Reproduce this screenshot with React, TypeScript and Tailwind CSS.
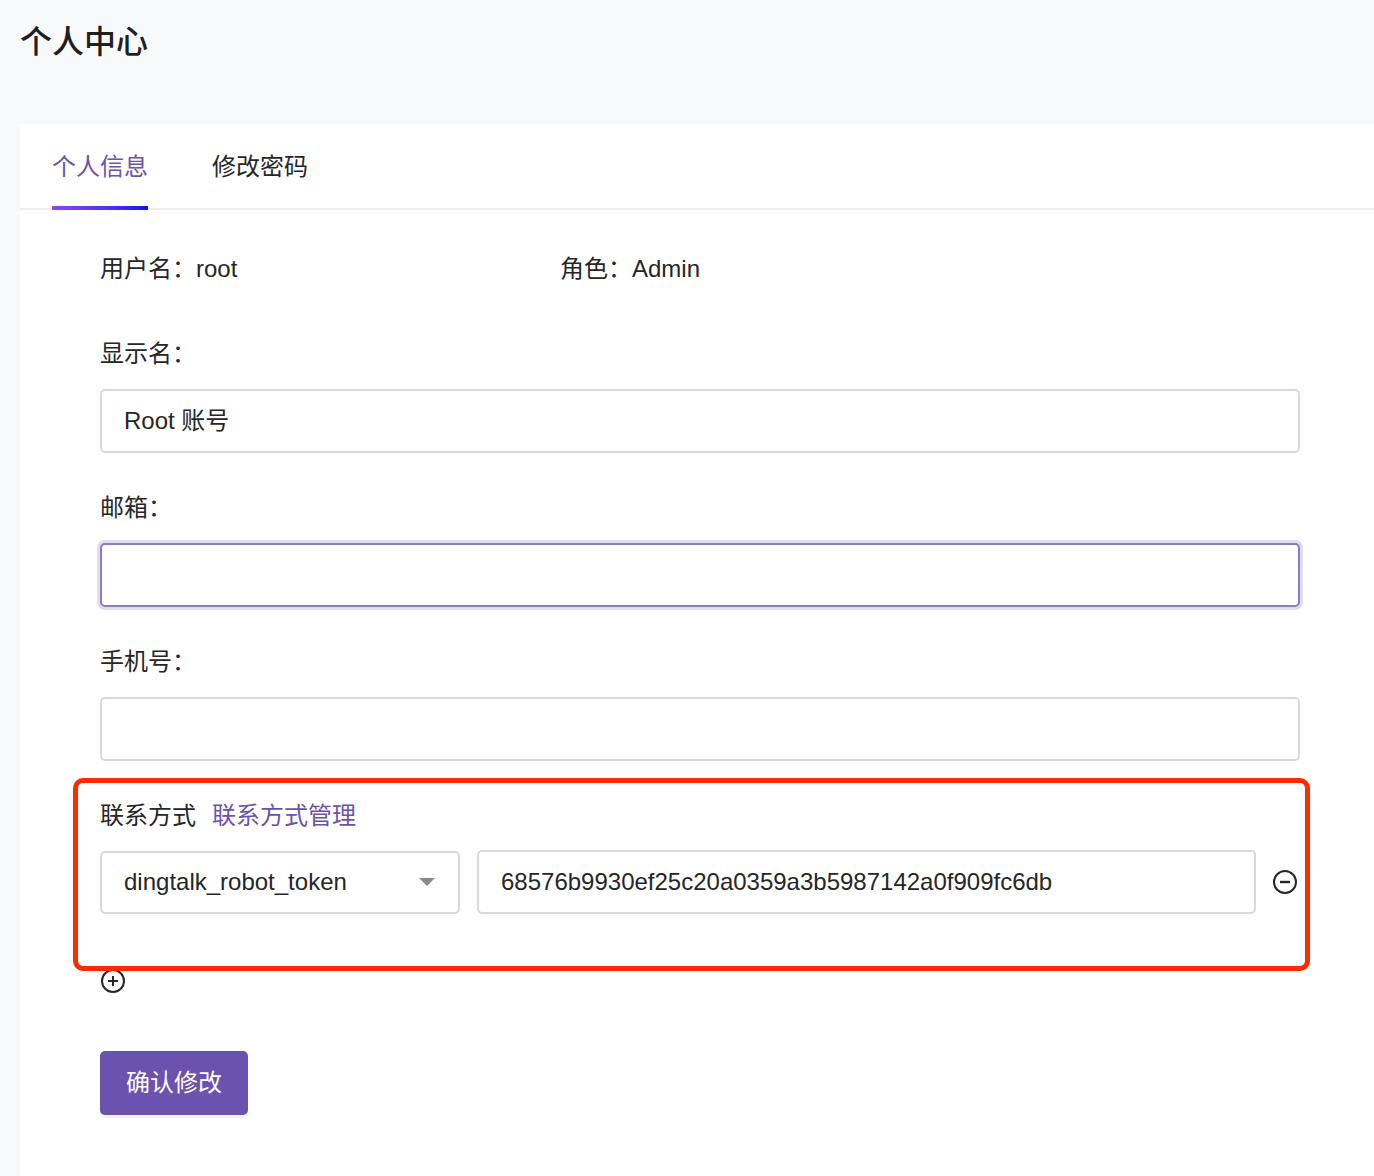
import React from "react";

const font = { fontFamily: '"Liberation Sans", "Noto Sans CJK SC", sans-serif' };

function Field({ label, value, focused }: { label: string; value?: string; focused?: boolean }) {
  return (
    <div className="flex flex-col">
      <div className="text-[24px] leading-[30px] text-[#262626] h-[30px]">{label}</div>
      <div
        className={
          "mt-[20px] h-[64px] w-[1200px] rounded-[5px] bg-white flex items-center px-[22px] text-[24px] text-[#262626] " +
          (focused
            ? "border-2 border-[#8d7bc4] shadow-[0_0_0_3px_#e1ddf0]"
            : "border-2 border-[#d9d9d9]")
        }
      >
        <span className="-mt-[1px]">{value}</span>
      </div>
    </div>
  );
}

export default function App() {
  return (
    <div className="min-h-[1176px] w-[1374px] bg-[#f8f9fb] flex flex-col overflow-hidden" style={font}>
      <div className="h-[124px] pl-[20px] pt-[22px]">
        <h1 className="text-[32px] leading-[40px] font-medium text-[#1f1f1f]">个人中心</h1>
      </div>
      <div className="ml-[20px] flex-1 bg-white relative">
        <div className="relative flex h-[86px] border-b-2 border-[#eeeeee] pl-[32px]">
          <div className="relative flex items-center h-full text-[24px] text-[#6b52ae]">
            <span className="mt-[1px]">个人信息</span>
            <div className="absolute left-0 right-0 -bottom-[2px] h-[4px] bg-gradient-to-r from-[#8b45f1] to-[#0a12f0]" />
          </div>
          <div className="ml-[64px] flex items-center h-full text-[24px] text-[#262626]">
            <span className="mt-[1px]">修改密码</span>
          </div>
        </div>

        <div className="pl-[80px] pt-[44px]">
          <div className="flex text-[24px] leading-[30px] text-[#262626]">
            <div className="w-[460px]">用户名：root</div>
            <div>角色：Admin</div>
          </div>

          <div className="mt-[55px] flex flex-col gap-[40px]">
            <Field label="显示名：" value="Root 账号" />
            <Field label="邮箱：" focused />
            <Field label="手机号：" />
          </div>

          <div className="mt-[40px]">
            <div className="flex text-[24px] leading-[30px]">
              <span className="text-[#262626]">联系方式</span>
              <span className="ml-[16px] text-[#6b52ae]">联系方式管理</span>
            </div>
            <div className="mt-[19px] flex items-center">
              <div className="h-[63px] w-[360px] rounded-[5px] border-2 border-[#d9d9d9] flex items-center justify-between pl-[22px] pr-[22px] text-[24px] text-[#262626]">
                <span>dingtalk_robot_token</span>
                <svg width="18" height="10" viewBox="0 0 18 10">
                  <path d="M1 1 L17 1 L9 9 Z" fill="#8a8a8a" />
                </svg>
              </div>
              <div className="ml-[17px] h-[64px] w-[779px] rounded-[5px] border-2 border-[#d9d9d9] flex items-center pl-[22px] text-[24px] text-[#262626]">
                <span>68576b9930ef25c20a0359a3b5987142a0f909fc6db</span>
              </div>
              <svg className="ml-[16px]" width="26" height="26" viewBox="0 0 26 26">
                <circle cx="13" cy="13" r="11" fill="none" stroke="#262626" strokeWidth="2" />
                <path d="M8 13 H18" stroke="#262626" strokeWidth="2.4" />
              </svg>
            </div>
            <div className="mt-[54px] h-[26px]">
              <svg width="26" height="26" viewBox="0 0 26 26">
                <circle cx="13" cy="13" r="11" fill="none" stroke="#262626" strokeWidth="2" />
                <path d="M8 13 H18 M13 8 V18" stroke="#262626" strokeWidth="2" />
              </svg>
            </div>
          </div>

          <button className="mt-[57px] h-[64px] w-[148px] rounded-[5px] bg-[#6b52ae] text-white text-[24px] shadow-[0_3px_0_#f2f2f4]">
            确认修改
          </button>
        </div>

        <div className="absolute left-[53px] top-[654px] w-[1237px] h-[193px] rounded-[10px] border-[5px] border-[#ff2a00] pointer-events-none" />
      </div>
    </div>
  );
}
